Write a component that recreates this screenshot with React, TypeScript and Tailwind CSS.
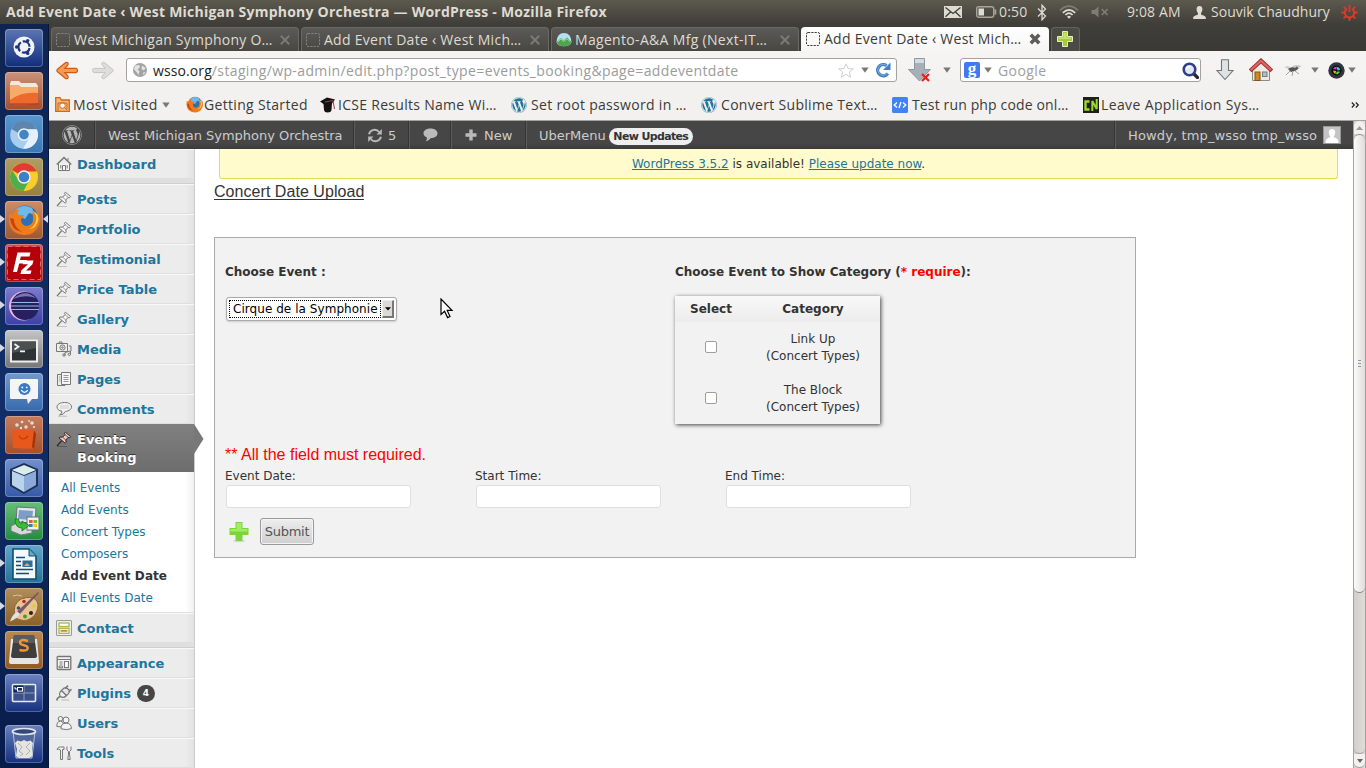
import React from "react";
import { FaWordpress } from "react-icons/fa";

const UB = "font-['Open_Sans','Noto_Sans',sans-serif] whitespace-nowrap";

/* ---------- small shared drawings ---------- */

function Caret({ className = "" }: { className?: string }) {
  return (
    <svg width="8" height="6" viewBox="0 0 8 6" className={`shrink-0 ${className}`}>
      <path d="M0.3 0.5H7.7L4 5.7Z" fill="#7b7873" />
    </svg>
  );
}

function Cross({ color, width = 3 }: { color: string; width?: number }) {
  return (
    <svg width="12" height="12" viewBox="0 0 12 12" className="shrink-0">
      <path d="M1.8 1.8L10.2 10.2M10.2 1.8L1.8 10.2" stroke={color} strokeWidth={width} />
    </svg>
  );
}

function EmptyFavicon({ color }: { color: string }) {
  return (
    <svg width="14" height="14" viewBox="0 0 14 14" className="shrink-0">
      <rect x="0.5" y="0.5" width="13" height="13" rx="1.5" fill="none" stroke={color} strokeDasharray="2.2 1.1" />
    </svg>
  );
}

/* ---------- title bar ---------- */

function TitleBar() {
  return (
    <header className={`flex h-6 w-full shrink-0 items-center bg-linear-to-b from-[#5d594e] to-[#3f3e39] pl-[6px] text-[#dfdbd2] ${UB}`}>
      <span className="w-[938px] text-[14px] leading-6 font-bold tracking-[0.23px]">
        Add Event Date ‹ West Michigan Symphony Orchestra — WordPress - Mozilla Firefox
      </span>
      <svg width="18" height="12" viewBox="0 0 18 12" className="shrink-0">
        <rect width="18" height="12" fill="#dfdbd2" />
        <path d="M1.5 1.5L9 7.5L16.5 1.5M1.5 10.8L6.5 6M16.5 10.8L11.5 6" fill="none" stroke="#3f3e39" strokeWidth="1.3" />
      </svg>
      <svg width="21" height="12" viewBox="0 0 21 12" className="ml-[14px] shrink-0">
        <rect x="0.7" y="0.7" width="17" height="10.6" rx="2" fill="none" stroke="#a9a59b" strokeWidth="1.4" />
        <rect x="18.5" y="3.5" width="1.8" height="5" fill="#a9a59b" />
        <rect x="2.5" y="2.5" width="5.5" height="7" fill="#dfdbd2" />
      </svg>
      <span className="ml-[2px] w-[38px] text-[14px] leading-6 tracking-[0.15px]">0:50</span>
      <svg width="10" height="17" viewBox="0 0 10 17" className="shrink-0">
        <path d="M1 4.5L8.5 12L5 15.8V1.2L8.5 5L1 12.5" fill="none" stroke="#dfdbd2" strokeWidth="1.3" />
      </svg>
      <svg width="20" height="14" viewBox="0 0 20 14" className="ml-[12px] shrink-0" fill="none">
        <path d="M1 5.3Q10-3.1 19 5.3" stroke="#807c73" strokeWidth="1.7" />
        <path d="M3.8 7.8Q10 1.8 16.2 7.8" stroke="#dfdbd2" strokeWidth="1.7" />
        <path d="M6.4 10Q10 6.4 13.6 10" stroke="#dfdbd2" strokeWidth="1.7" />
        <path d="M8 11.7Q10 10 12 11.7L10 13.8Z" fill="#dfdbd2" />
      </svg>
      <svg width="18" height="12" viewBox="0 0 18 12" className="ml-[12px] shrink-0">
        <path d="M0.5 4H3.5L7.5 0.5V11.5L3.5 8H0.5Z" fill="#7f7c74" />
        <path d="M10.8 3.2L16.6 9M16.6 3.2L10.8 9" stroke="#7f7c74" strokeWidth="1.7" />
      </svg>
      <span className="ml-[18px] w-[66px] text-[14px] leading-6 tracking-[0.12px]">9:08 AM</span>
      <svg width="13" height="13" viewBox="0 0 13 13" className="shrink-0">
        <path d="M6.5 0C4.3 0 3.4 1.6 3.6 3.6C3.7 5.3 4.6 6.6 5 7.4V8.6C4 9.4 0.8 9.6 0.2 11.2V13H12.8V11.2C12.2 9.6 9 9.4 8 8.6V7.4C8.4 6.6 9.3 5.3 9.4 3.6C9.6 1.6 8.7 0 6.5 0Z" fill="#dfdbd2" />
      </svg>
      <span className="ml-[5px] w-[130px] text-[14px] leading-6 tracking-[0.02px]">Souvik Chaudhury</span>
      <svg width="17" height="17" viewBox="0 0 17 17" className="shrink-0" fill="none" stroke="#e0392b">
        <path d="M5.9 4.8A4.7 4.7 0 1 0 11.1 4.8" strokeWidth="2" />
        <path d="M8.5 1V8" strokeWidth="1.8" />
        <path d="M2.8 2.9L4.8 4.9M14.2 2.9L12.2 4.9M0.4 8.5H3M14 8.5H16.6M2.6 14.4L4.8 12.2M14.4 14.4L12.2 12.2M8.5 14V16.8" strokeWidth="1.9" />
      </svg>
    </header>
  );
}

/* ---------- launcher ---------- */

const tiles: { bg: string; running?: boolean; focused?: boolean; art: React.ReactNode }[] = [
  {
    bg: "from-[#5d76b2] to-[#122d7c]",
    art: (
      <>
        <circle cx="19" cy="18" r="10.5" fill="#f2f2f5" />
        <circle cx="19" cy="18" r="5.6" fill="none" stroke="#1c3580" strokeWidth="2.2" strokeDasharray="9.7 2" strokeDashoffset="-1" />
        <circle cx="11.6" cy="18" r="1.7" fill="#1c3580" />
        <circle cx="22.7" cy="11.6" r="1.7" fill="#1c3580" />
        <circle cx="22.7" cy="24.4" r="1.7" fill="#1c3580" />
      </>
    ),
  },
  {
    bg: "from-[#c9937b] to-[#a14f30]",
    art: (
      <>
        <path d="M5 12L6 9H14L16 11H31L33 14V30H5Z" fill="#f3e8de" />
        <path d="M5 13.5H14L16 15.5H33V31Q19 34 5 32Z" fill="#ee6a2c" />
        <path d="M5 13.5H14L16 15.5H33V21Q17 19 5 28Z" fill="#f7ab68" />
        <path d="M5 32H34" stroke="#b53410" />
      </>
    ),
  },
  {
    bg: "from-[#5b97cd] to-[#3a78b7]",
    art: (
      <>
        <circle cx="19" cy="20" r="13.8" fill="#a8cdee" />
        <path d="M6.5 14A13.8 13.8 0 0 1 31.5 14H19A6 6 0 0 0 13.5 18Z" fill="#5d85ad" />
        <path d="M32 14.5A14 14 0 0 1 18 33.8L24.5 22.5A6 6 0 0 0 23 14.5Z" fill="#e5f0fa" />
        <circle cx="19" cy="19.6" r="5.6" fill="#4384c4" stroke="#e8f2fb" strokeWidth="1.5" />
      </>
    ),
  },
  {
    bg: "from-[#b19c65] to-[#968041]",
    art: (
      <>
        <circle cx="19" cy="19" r="14" fill="#f8cd28" />
        <path d="M19 19L6.9 12A14 14 0 0 1 31.1 12L31.6 13.5H19Z" fill="#e03d32" />
        <path d="M6.9 12A14 14 0 0 0 18.5 33L24.5 22L19 19L13.5 22Z" fill="#50ae49" />
        <circle cx="19" cy="19" r="6.7" fill="#f4f4f2" />
        <circle cx="19" cy="19" r="5.3" fill="#3f7fc6" />
      </>
    ),
  },
  {
    bg: "from-[#cc8e69] to-[#9e5731]",
    running: true,
    focused: true,
    art: <FirefoxArt />,
  },
  {
    bg: "from-[#c85656] to-[#a80d12]",
    running: true,
    art: (
      <>
        <rect x="2.5" y="2.5" width="33" height="33" fill="#b40008" stroke="#d86a6a" strokeDasharray="5 3" />
        <path d="M12.5 8.5H25.5L24.5 12.5H15.8L15 16H22L21 19.5H14.2L12 28H8Z" fill="#fff" />
        <path d="M18.5 16.5H28.5L27.5 20.3L21 26.5H26.5L25.5 30H15.5L16.3 26.5L23 20.2H17.8Z" fill="#fff" />
      </>
    ),
  },
  {
    bg: "from-[#7c7cd0] to-[#3d3fa6]",
    running: true,
    art: (
      <>
        <circle cx="18.5" cy="19" r="14.5" fill="#f5b6dc" />
        <circle cx="20" cy="19" r="14" fill="#262060" />
        <path d="M8 12Q20 1 31 11Q20 7 8 12Z" fill="#7776b6" />
        <path d="M6 15.5H34M6 19H34M6 22.5H34" stroke="#95b9df" strokeWidth="1.1" />
      </>
    ),
  },
  {
    bg: "from-[#c6c6c6] to-[#767676]",
    running: true,
    art: (
      <>
        <rect x="5" y="9.5" width="28" height="23" fill="#eeeeec" />
        <rect x="7" y="11.5" width="24" height="19" fill="#2d3234" />
        <path d="M7 11.5H31V18L7 23Z" fill="#4a4f50" />
        <path d="M9.5 14L13.5 16.8L9.5 19.5M15 21.3H20" fill="none" stroke="#f4f4f4" strokeWidth="1.7" />
      </>
    ),
  },
  {
    bg: "from-[#7399cc] to-[#376aac]",
    art: (
      <>
        <path d="M6 6H32Q33 6 33 7V25Q33 26 32 26H27L23 31L22 26H6Q5 26 5 25V7Q5 6 6 6Z" fill="#f3f5f7" />
        <circle cx="19.5" cy="16" r="6" fill="#3a79c5" />
        <circle cx="17.3" cy="14.4" r="0.9" fill="#fff" />
        <circle cx="21.7" cy="14.4" r="0.9" fill="#fff" />
        <path d="M16.2 17.2Q19.5 21.5 22.8 17.2" fill="none" stroke="#fff" strokeWidth="1.3" />
      </>
    ),
  },
  {
    bg: "from-[#c57c5d] to-[#a3512c]",
    art: (
      <>
        <path d="M7 14H29L31 18L29 33L8 32Z" fill="#e8581c" />
        <path d="M29 14L31 18L29 33L27 31Z" fill="#9c3410" />
        <path d="M14 20Q18 26 23 20" fill="none" stroke="#bc3c0c" strokeWidth="1.2" />
        <g fill="#e6dcd6">
          <circle cx="12" cy="9" r="1.8" /><circle cx="17" cy="6" r="1.3" /><circle cx="21" cy="11" r="1.7" /><circle cx="27" cy="7" r="1.8" /><circle cx="16" cy="12" r="1.2" /><circle cx="29" cy="11" r="1.1" /><circle cx="24" cy="5" r="0.9" />
        </g>
      </>
    ),
  },
  {
    bg: "from-[#7390cd] to-[#365aa9]",
    art: (
      <>
        <path d="M19 4L33 10V27L19 35L5 27V10Z" fill="#21304f" />
        <path d="M19 6L31 11L19 16L7 11Z" fill="#d9efee" />
        <path d="M7 12L19 17V33L7 26Z" fill="#b9d2ed" />
        <path d="M31 12L19 17V33L31 26Z" fill="#8aaada" />
      </>
    ),
  },
  {
    bg: "from-[#67bf78] to-[#1f8c40]",
    art: (
      <>
        <path d="M12 5L31 6L30 21L11 20Z" fill="#dfe5ea" stroke="#697079" />
        <path d="M14 8L28 9L27 18L13 17Z" fill="#7c9dc7" />
        <path d="M6 24L14 20L27 23V31L16 33L6 29Z" fill="#d5d9da" stroke="#727a7c" />
        <rect x="22" y="15" width="12" height="13" fill="#eef0f1" stroke="#697079" />
        <path d="M24 18H27.6V21H24Z" fill="#e9622c" /><path d="M28.4 18H32V21H28.4Z" fill="#7bb83a" />
        <path d="M24 22H27.6V25H24Z" fill="#3a78c8" /><path d="M28.4 22H32V25H28.4Z" fill="#f2c22b" />
        <path d="M10 17Q10 26 17 26V29L24 23.5L17 19V22Q14 22 13.5 17Z" fill="#3cbc38" stroke="#187a1c" strokeWidth="0.8" />
      </>
    ),
  },
  {
    bg: "from-[#65a7c9] to-[#23719a]",
    running: true,
    art: (
      <>
        <path d="M8 4H24L31 11V34H8Z" fill="#f6f9fb" stroke="#0d4f72" strokeWidth="1.6" />
        <path d="M24 4V11H31" fill="#63aace" stroke="#0d4f72" />
        <path d="M11 16.5H16M11 20.5H16M11 24.5H28M11 28.5H24M11 12.5H20" stroke="#0a507a" strokeWidth="1.7" />
        <rect x="17.5" y="15.5" width="10" height="6.5" fill="#2b6f9b" />
        <path d="M19 21L22 18L25 21Z" fill="#f3a94a" />
      </>
    ),
  },
  {
    bg: "from-[#b18e5b] to-[#8a6127]",
    running: true,
    art: (
      <>
        <path d="M10 28Q7 16 16 11Q27 7 32 13Q35 20 29 28Q22 34 16 32Q10 31 10 28Z" fill="#e8c590" stroke="#8d6635" />
        <circle cx="19" cy="13.5" r="1.8" fill="#b9262d" /><circle cx="13.5" cy="20" r="1.8" fill="#2d4e9e" /><circle cx="29" cy="18" r="1.8" fill="#dfc93a" /><circle cx="26" cy="25" r="2" fill="#222" /><circle cx="20" cy="28.5" r="2" fill="#4b9a41" />
        <path d="M33 4L34 5L15 26L12 23.5Z" fill="#7b5867" />
        <path d="M12 23.5L15 26Q12 31 5 33.5Q7 27 12 23.5Z" fill="#dfe1e4" />
        <path d="M8 8Q12 6 17 8" fill="none" stroke="#d9c4a1" />
      </>
    ),
  },
  {
    bg: "from-[#ba8a53] to-[#925a22]",
    art: (
      <>
        <path d="M6 8H32L34 31Q34 33 32 33H6Q4 33 4 31Z" fill="#e5e5e5" />
        <path d="M9 4H29L32 25Q32 27 30 27H8Q6 27 6 25Z" fill="#3e3e3e" />
        <path d="M9 4H29L30 12H8Z" fill="#5b5b5b" />
        <path d="M23 10Q15 7.4 15 11.5Q15 13.5 19 14.3Q23.2 15.2 22.7 17.4Q22 20.5 14.5 19" fill="none" stroke="#f0953a" strokeWidth="2.4" />
      </>
    ),
  },
  {
    bg: "from-[#6e83c2] to-[#16307f]",
    art: (
      <>
        <rect x="7.5" y="10.5" width="23" height="17" rx="1" fill="#3c5286" stroke="#e6e9f2" strokeWidth="1.6" />
        <path d="M19 11V27M8 19H30" stroke="#8c9bbf" strokeWidth="1" />
        <rect x="8.5" y="11.5" width="10" height="7" fill="#14265a" />
        <rect x="12.5" y="13.5" width="5" height="3.6" fill="none" stroke="#fff" />
        <path d="M10 13V15H12" stroke="#fff" fill="none" />
      </>
    ),
  },
  {
    bg: "from-[#6a80be] to-[#16307f]",
    art: (
      <>
        <path d="M8 6L11 33H27L30 6Z" fill="#51679b" stroke="#b9c4d8" />
        <ellipse cx="19" cy="6.5" rx="11.5" ry="3" fill="#33477a" stroke="#dfe5ee" strokeWidth="1.7" />
        <path d="M10 18L12.5 15.5L16 16.5L19 15L22 16.5L25.5 15.5L28 18L27 24L27.5 31L24 33H14L11 31L12 24Z" fill="#e4e4e1" />
        <path d="M13 18L17 22L14 26L18 29M25 18L21 22L25 26L21 30M15 31L18 29" stroke="#b0b1b0" fill="none" />
      </>
    ),
  },
];

function FirefoxArt() {
  return (
    <>
      <circle cx="20" cy="17.5" r="13" fill="#2f6fb4" />
      <path d="M10 9Q18 2 27 7L30 14L24 12L20 18L14 15Z" fill="#71b9e6" />
      <path d="M4 13Q6 12 7 14Q9 8 14 9Q11 12 14 14H19Q19 16 16 18Q16 25 22 25Q29 24 28 16Q27 11 28 10Q31 13 31.5 16Q33 11 31 8Q37 16 34 24Q30 34 19 34Q5 33 4 20Z" fill="#ee7c1b" />
      <path d="M28 10Q32 14 31 20Q29 27 23 28Q32 28 33.5 18Q33 12 28 10Z" fill="#fbd147" />
      <path d="M5 17Q6 29 17 31Q8 25 9 18Z" fill="#c9430f" />
    </>
  );
}

function Launcher() {
  return (
    <aside className="relative flex w-[49px] shrink-0 flex-col gap-[5px] border-r border-[#0a1638] bg-linear-to-b from-[#0f2450] via-[#122e68] to-[#081c4a] pt-[5px]">
      {tiles.map((t, i) => (
        <div key={i} className={`relative flex h-[38px] shrink-0 pl-[5px] ${i === 16 ? "mt-[8px]" : ""}`}>
          <div className={`h-[38px] w-[38px] rounded-[4px] bg-linear-to-b ring-1 ring-[#ffffff40] ring-inset ${t.bg}`}>
            <svg width="38" height="38" viewBox="0 0 38 38">{t.art}</svg>
          </div>
          {t.running && (
            <svg width="5" height="10" viewBox="0 0 5 10" className="absolute top-[13px] left-0">
              <path d="M0 1L5 5L0 9Z" fill="#d5d9e2" />
            </svg>
          )}
          {t.focused && (
            <svg width="5" height="10" viewBox="0 0 5 10" className="absolute top-[13px] right-0">
              <path d="M5 1L0 5L5 9Z" fill="#d5d9e2" />
            </svg>
          )}
        </div>
      ))}
    </aside>
  );
}

/* ---------- browser chrome ---------- */

function Tab({ icon, label, className }: { icon: React.ReactNode; label: string; className: string }) {
  return (
    <div className={`mr-[2px] flex h-6 w-[248px] shrink-0 items-center rounded-t-[4px] border border-b-0 border-[#6b6963] bg-linear-to-b from-[#5b5a56] to-[#484742] pr-[7px] pl-[4px] text-[#dfdbd2] ${UB}`}>
      {icon}
      <span className={`grow pl-[4px] text-[14px] leading-6 ${className}`}>{label}</span>
      <Cross color="#7b7a75" width={2} />
    </div>
  );
}

function TabStrip() {
  return (
    <div className="flex h-[27px] items-end bg-linear-to-b from-[#3f3e39] to-[#3a3935] pl-[2px]">
      <Tab icon={<EmptyFavicon color="#85837d" />} label="West Michigan Symphony O…" className="tracking-[0.23px]" />
      <Tab icon={<EmptyFavicon color="#85837d" />} label="Add Event Date ‹ West Mich…" className="tracking-[0.27px]" />
      <Tab
        icon={
          <svg width="16" height="16" viewBox="0 0 16 16" className="shrink-0">
            <path d="M0.5 10Q1 1 8 1Q15 1 15.5 10Q15 14 8 14.3Q1 14 0.5 10Z" fill="#b3dff2" />
            <path d="M1 10L5 6L7.5 8.5L11 5.5L15.3 10Q15 14 8 14.3Q1 14 1 10Z" fill="#4fa44e" />
            <path d="M2 9.8L5 7L7.5 9.5L11 6.8L14 9.8" fill="none" stroke="#9fd788" />
          </svg>
        }
        label="Magento-A&A Mfg (Next-IT…"
        className="-ml-px tracking-[0.32px]"
      />
      <div className={`flex h-6 w-[248px] shrink-0 items-center rounded-t-[4px] bg-linear-to-b from-white to-[#f6f5f4] pr-[8px] pl-[5px] text-[#3c3b37] ${UB}`}>
        <EmptyFavicon color="#3c3b37" />
        <span className="grow pl-[4px] text-[14px] leading-6 tracking-[0.27px]">Add Event Date ‹ West Mich…</span>
        <Cross color="#5d5c58" width={3.6} />
      </div>
      <div className="ml-[2px] flex h-6 w-[29px] items-center justify-center rounded-t-[4px] border border-b-0 border-[#65635c] bg-[#4b4a45] pr-[2px] pb-[2px]">
        <svg width="16" height="16" viewBox="0 0 16 16">
          <path d="M5.5 0.5H10.5V5.5H15.5V10.5H10.5V15.5H5.5V10.5H0.5V5.5H5.5Z" fill="#a4cc39" stroke="#e6f0c4" />
          <path d="M6.5 2H9.5V6.5H14V8H2V6.5H6.5Z" fill="#c5e26c" />
        </svg>
      </div>
    </div>
  );
}

function NavBar() {
  return (
    <div className="flex h-[38px] items-center bg-linear-to-b from-[#f6f5f4] to-[#f2f1f0] pl-[7px]">
      <svg width="22" height="19" viewBox="0 0 22 19" className="shrink-0">
        <path d="M9 2Q10.5 0.6 12 2Q12.5 3.5 11.5 4.5L8.7 7.4H20Q21.5 7.8 21.5 9.5Q21.5 11.2 20 11.6H8.7L11.5 14.5Q12.5 15.5 12 17Q10.5 18.4 9 17L1.2 10.5Q0.4 9.5 1.2 8.5Z" fill="#f39a5b" stroke="#cf5a16" strokeWidth="1.1" />
      </svg>
      <svg width="22" height="19" viewBox="0 0 22 19" className="ml-[14px] shrink-0">
        <path d="M13 2Q11.5 0.6 10 2Q9.5 3.5 10.5 4.5L13.3 7.4H2Q0.5 7.8 0.5 9.5Q0.5 11.2 2 11.6H13.3L10.5 14.5Q9.5 15.5 10 17Q11.5 18.4 13 17L20.8 10.5Q21.6 9.5 20.8 8.5Z" fill="#deddda" stroke="#c6c4c0" />
      </svg>
      <div className={`ml-[12px] flex h-6 w-[771px] shrink-0 items-center rounded-[3px] border border-[#a5a29d] bg-white pl-[6px] ${UB}`}>
        <svg width="14" height="14" viewBox="0 0 14 14" className="shrink-0">
          <circle cx="7" cy="7" r="7" fill="#a3a3a3" />
          <path d="M2 2.5L6 2L7 4L4.5 6.5L6.5 8L5.5 12L3.5 9L1 6.5ZM9 2.5L12.5 5L11 7.5L8.5 6ZM10 9.5L12.5 9L10.5 12Z" fill="#e4e4e4" />
        </svg>
        <span className="ml-[6px] w-[685px] pt-[2px] text-[14px] leading-[22px] tracking-[0.37px] text-[#9b9b9b]">
          <span className="tracking-[0.1px] text-[#1d1d1d]">wsso.org</span>/staging/wp-admin/edit.php?post_type=events_booking&amp;page=addeventdate
        </span>
        <svg width="16" height="15" viewBox="0 0 16 15" className="shrink-0">
          <path d="M8 0.8L10 5.6L15.3 5.8L11.3 9L12.6 14.2L8 11.4L3.4 14.2L4.7 9L0.7 5.8L6 5.6Z" fill="#fff" stroke="#cfcfcf" />
        </svg>
        <Caret className="ml-[7px]" />
        <svg width="16" height="16" viewBox="0 0 16 16" className="ml-[6px] shrink-0">
          <path d="M12.8 11.5A5.6 5.6 0 1 1 11.5 3.6" fill="none" stroke="#447fc0" strokeWidth="3.4" />
          <path d="M15.5 0.5V8H8Z" fill="#447fc0" />
          <path d="M12.4 11.2A5.4 5.4 0 1 1 12.4 4.4" fill="none" stroke="#83b2e0" strokeWidth="1" />
        </svg>
      </div>
      <svg width="25" height="24" viewBox="0 0 25 24" className="ml-[10px] shrink-0">
        <path d="M7.5 0.5H17.5V11.5H23.5L12.5 23L1.5 11.5H7.5Z" fill="#a6b0b8" stroke="#8f989e" />
        <path d="M8 1H17V5H8Z" fill="#d5dbdf" />
        <path d="M15 16L22 23M22 16L15 23" stroke="#ef1d1d" strokeWidth="2.2" />
      </svg>
      <Caret className="ml-[11px]" />
      <div className={`ml-[9px] flex h-6 w-[241px] shrink-0 items-center rounded-[3px] border border-[#a5a29d] bg-white pl-[3px] ${UB}`}>
        <div className="flex h-4 w-4 items-center justify-center rounded-[2px] bg-[#4279f0] pb-[3px] font-['Liberation_Serif',serif] text-[17px] leading-4 font-bold text-white">g</div>
        <Caret className="ml-[4px]" />
        <span className="ml-[6px] w-[184px] pt-[2px] text-[14px] leading-[22px] tracking-[0.4px] text-[#a0a0a0]">Google</span>
        <svg width="17" height="17" viewBox="0 0 17 17" className="shrink-0">
          <path d="M11 11L15.5 15.5" stroke="#26262e" strokeWidth="3.2" strokeLinecap="round" />
          <circle cx="7.5" cy="7.5" r="5.8" fill="#dfe9f7" stroke="#2f3f88" strokeWidth="2.6" />
          <path d="M4.5 7Q5.5 4 8.5 4.5" fill="none" stroke="#fff" strokeWidth="1.5" />
        </svg>
      </div>
      <svg width="18" height="22" viewBox="0 0 18 22" className="ml-[15px] shrink-0">
        <path d="M5.5 0.8H12.5V11.5H17L9 20.5L1 11.5H5.5Z" fill="#dfe3e4" stroke="#717577" strokeWidth="1.1" />
      </svg>
      <svg width="24" height="24" viewBox="0 0 24 24" className="ml-[15px] shrink-0">
        <path d="M3.5 11V22.5H20.5V11L12 4Z" fill="#eceae5" stroke="#8c8a85" />
        <path d="M1.2 12.8L12 2.8L22.8 12.8" fill="none" stroke="#9e2222" strokeWidth="4" />
        <path d="M1.8 12.2L12 2.8L22.2 12.2" fill="none" stroke="#d86464" strokeWidth="2.4" />
        <rect x="6" y="14" width="5" height="8.5" fill="#d08a1c" stroke="#7c5414" />
        <rect x="13.5" y="14" width="4.5" height="4.5" fill="#aebfd2" stroke="#7a7a76" />
      </svg>
      <svg width="18" height="14" viewBox="0 0 18 14" className="ml-[11px] shrink-0">
        <path d="M0.5 4.5Q4 2 7 5Q10 0 17.5 3Q13 7 9 7Z" fill="#c9c9c9" />
        <path d="M4 6Q8 3 11 5L13 3.5L14.5 5.5L12 7.5L7 9Z" fill="#555" />
        <path d="M6 8L2 12M9 8L8 13M11 8L15 11" stroke="#999" strokeWidth="0.9" />
      </svg>
      <Caret className="ml-[9px]" />
      <svg width="17" height="17" viewBox="0 0 17 17" className="ml-[9px] shrink-0">
        <circle cx="8.5" cy="8.5" r="8.2" fill="#30363a" />
        <circle cx="8.5" cy="8.5" r="5" fill="#0a0a0c" />
        <path d="M5 7A4 4 0 0 1 8.5 4.7V7.5Z" fill="#d23bd6" />
        <path d="M8.5 4.7A4 4 0 0 1 12.3 8L9.5 8.5Z" fill="#35c6e8" />
        <path d="M12 9.5A4 4 0 0 1 8 12.3L8.6 9.5Z" fill="#5ed33c" />
        <path d="M7.5 12A4 4 0 0 1 5 8.5L8 9Z" fill="#e8b22c" />
      </svg>
      <Caret className="ml-[3px]" />
    </div>
  );
}

function Bookmark({ width, icon, gap, label, track, caret }: { width: string; icon: React.ReactNode; gap: string; label: string; track: string; caret?: boolean }) {
  return (
    <div className={`flex shrink-0 items-center ${width} ${UB}`}>
      {icon}
      <span className={`text-[14px] leading-5 text-[#3c3b37] ${gap} ${track}`}>{label}</span>
      {caret && <Caret className="ml-[4px]" />}
    </div>
  );
}

function BookmarksBar() {
  const wp = <FaWordpress size={16} color="#21759b" className="shrink-0" />;
  return (
    <div className="flex h-[32px] items-center border-b border-[#a5a29d] bg-[#f2f1f0] pl-[6px]">
      <Bookmark
        width="w-[131px]" gap="ml-[3px]" track="tracking-[0.42px]" label="Most Visited" caret
        icon={
          <svg width="15" height="15" viewBox="0 0 15 15" className="shrink-0">
            <path d="M0.7 14.3V0.7H5L6.5 3H14.3V14.3Z" fill="#f4b67a" stroke="#cf6a12" strokeWidth="1.3" />
            <circle cx="7.5" cy="8.5" r="2.8" fill="#fff" stroke="#cf6a12" />
            <path d="M3 14V6H12V12M9.5 10.5L12 13" fill="none" stroke="#cf6a12" />
          </svg>
        }
      />
      <Bookmark
        width="w-[134px]" gap="ml-[1px]" track="tracking-[0.32px]" label="Getting Started"
        icon={<svg width="17" height="17" viewBox="3 3 32 32" className="shrink-0"><FirefoxArt /></svg>}
      />
      <Bookmark
        width="w-[191px]" gap="ml-[2px]" track="tracking-[0.29px]" label="ICSE Results Name Wi…"
        icon={
          <svg width="16" height="16" viewBox="0 0 16 16" className="shrink-0">
            <path d="M0 4.5L7 0.5L15 2.5L12 6.5L11.5 13Q11 15.5 7.5 15.5Q4.5 15.5 4 13L3.5 7Z" fill="#111" />
            <path d="M5 5L13 3.5L14.5 12" fill="none" stroke="#a33a4a" />
          </svg>
        }
      />
      <Bookmark width="w-[190px]" gap="ml-[4px]" track="tracking-[0.31px]" label="Set root password in …" icon={wp} />
      <Bookmark width="w-[191px]" gap="ml-[4px]" track="tracking-[0.31px]" label="Convert Sublime Text…" icon={wp} />
      <Bookmark
        width="w-[191px]" gap="ml-[4px]" track="tracking-[0.14px]" label="Test run php code onl…"
        icon={
          <svg width="16" height="16" viewBox="0 0 16 16" className="shrink-0">
            <rect width="16" height="16" rx="1.5" fill="#4283f3" />
            <path d="M5 5.5L2.2 8L5 10.5M11 5.5L13.8 8L11 10.5M9 5L7 11" fill="none" stroke="#fff" strokeWidth="1.3" />
          </svg>
        }
      />
      <Bookmark
        width="w-[268px]" gap="ml-[2px]" track="tracking-[0.37px]" label="Leave Application Sys…"
        icon={
          <svg width="16" height="16" viewBox="0 0 16 16" className="shrink-0">
            <rect width="16" height="16" fill="#1e1e1c" />
            <path d="M6.5 4.5H2.5V12.5H6.5" fill="none" stroke="#9bd631" strokeWidth="2.4" />
            <path d="M9.3 14V4L13.7 12V2" fill="none" stroke="#9bd631" strokeWidth="2" />
          </svg>
        }
      />
      <svg width="9" height="6" viewBox="0 0 9 6" className="shrink-0">
        <path d="M0.8 0.5L3.3 3L0.8 5.5M4.8 0.5L7.3 3L4.8 5.5" fill="none" stroke="#222" strokeWidth="1.2" />
      </svg>
    </div>
  );
}

/* ---------- WordPress admin ---------- */

const DJ = "font-['DejaVu_Sans',sans-serif] whitespace-nowrap";

function AdminBar() {
  const cell = "flex h-full shrink-0 items-center border-r border-[#5c5c5c] shadow-[inset_-1px_0_0_#353535]";
  return (
    <div className={`flex h-7 shrink-0 items-center bg-linear-to-b from-[#464646] from-80% to-[#3a3a3a] text-[13px] leading-[26px] text-[#ccc] ${DJ}`}>
      <div className={`${cell} w-[47px] pl-[13px]`}>
        <FaWordpress size={20} color="#b5b5b5" />
      </div>
      <div className={`${cell} w-[259px] pl-[12px]`}>
        <span className="pt-[2px] tracking-[-0.03px]">West Michigan Symphony Orchestra</span>
      </div>
      <div className={`${cell} w-[55px] pl-[12px]`}>
        <svg width="16" height="15" viewBox="0 0 16 15" fill="none" stroke="#bababa" strokeWidth="1.9">
          <path d="M2 6.2A5.8 5.8 0 0 1 12.2 4M14 8.8A5.8 5.8 0 0 1 3.8 11" />
          <path d="M14.8 1V6.5H9.5Z" fill="#bababa" stroke="none" />
          <path d="M1.2 14V8.5H6.5Z" fill="#bababa" stroke="none" />
        </svg>
        <span className="ml-[5px] pt-[2px]">5</span>
      </div>
      <div className={`${cell} w-[42px] pl-[13px]`}>
        <svg width="15" height="14" viewBox="0 0 15 14">
          <path d="M7.5 0.5C3 0.5 0.5 2.7 0.5 5.3Q0.6 8.3 4 9.6Q4 12 2.6 13.5Q6 13 7.5 10.2C12 10.2 14.5 8 14.5 5.3C14.5 2.7 12 0.5 7.5 0.5Z" fill="#bababa" />
        </svg>
      </div>
      <div className={`${cell} w-[75px] pl-[13px]`}>
        <svg width="12" height="12" viewBox="0 0 12 12"><path d="M4.3 0.5H7.7V4.3H11.5V7.7H7.7V11.5H4.3V7.7H0.5V4.3H4.3Z" fill="#bababa" /></svg>
        <span className="ml-[7px] pt-[2px]">New</span>
      </div>
      <div className="flex h-full w-[588px] shrink-0 items-center pl-[12px] shadow-[inset_-1px_0_0_#353535]">
        <span className="pt-[2px]">UberMenu</span>
        <span className="mt-[2px] ml-[3px] flex h-[17px] w-[84px] items-center justify-center rounded-full bg-[#eee] text-[11px] leading-none font-bold tracking-[-0.65px] text-[#333]">New Updates</span>
      </div>
      <div className="flex h-full grow items-center border-l border-[#5c5c5c] pl-[12px]">
        <span className="w-[189px] pt-[2px] tracking-[0.13px]">Howdy, tmp_wsso tmp_wsso</span>
        <svg width="18" height="18" viewBox="0 0 18 18" className="ml-[6px] shrink-0">
          <rect x="0.5" y="0.5" width="17" height="17" fill="#c5c5c5" stroke="#999" />
          <path d="M9 3Q12.2 3 12.2 6.5Q12 9 10.8 10.3V11.3Q14.8 12.2 15.3 15V17H2.7V15Q3.2 12.2 7.2 11.3V10.3Q6 9 5.8 6.5Q5.8 3 9 3Z" fill="#fff" />
        </svg>
      </div>
    </div>
  );
}

const Svg16 = ({ children }: { children: React.ReactNode }) => (
  <svg width="16" height="16" viewBox="0 0 16 16" fill="none" stroke="#777" className="shrink-0">{children}</svg>
);

const PinIcon = ({ color = "#777", fill = "#f4f4f4" }: { color?: string; fill?: string }) => (
  <svg width="16" height="16" viewBox="0 0 16 16" className="shrink-0" fill={fill} stroke={color}>
    <path d="M1 15L6 9.3" strokeWidth="1.2" />
    <path d="M1.5 15.5H11" stroke={color} strokeOpacity="0.35" fill="none" />
    <path d="M9.4 1.2L14.6 5.6L13.4 6.8L12.2 6.3L9.8 9L10.2 11.3L9.2 12.2L3 7L4 6L6.6 6.2L9 3.6L8.4 2.3Z" />
    <path d="M9 3.6L12.2 6.3M6.6 6.2L9.8 9" fill="none" strokeWidth="0.7" />
  </svg>
);

const HouseIcon = () => (
  <Svg16>
    <path d="M2.5 8V14.5H13.5V8" fill="#f7f7f7" />
    <path d="M0.8 8.5L8 1.5L15.2 8.5" strokeWidth="1.6" />
    <path d="M12 2V4.5M6.5 14V9.5H9.5V14M4.8 9V12.5M11.2 9V12.5" />
  </Svg16>
);
const MediaIcon = () => (
  <Svg16>
    <path d="M0.5 2.5H11.5V10.5H0.5ZM3 2.5V1H6V2.5" fill="#eee" />
    <circle cx="6.5" cy="6.5" r="2.6" /><circle cx="6.5" cy="6.5" r="0.8" />
    <path d="M9 14.5V11.5L14.5 10V13.5M13 5H15V10" />
    <circle cx="8" cy="14" r="1.2" /><circle cx="13.3" cy="13.3" r="1.2" />
  </Svg16>
);
const PagesIcon = () => (
  <Svg16>
    <path d="M1.5 3.5H9V14.5H1.5Z" fill="#eee" />
    <path d="M5.5 1.5H14.5V13.5H5.5Z" fill="#f6f6f6" />
    <path d="M7.5 4.5H12.5M7.5 6.5H12.5M7.5 8.5H12.5M7.5 10.5H12.5M3 6H4.5M3 8H4.5M3 10H4.5" stroke="#999" />
  </Svg16>
);
const CommentIcon = () => (
  <Svg16>
    <path d="M8.5 1.5C4 1.5 1 3.4 1 6C1 8.2 3 9.8 6 10.3Q6 12.7 3.5 14Q8 13.7 9.5 10.4C13 10 15.5 8.3 15.5 6C15.5 3.4 13 1.5 8.5 1.5Z" fill="#f2f2f2" />
    <path d="M4 5H13M4 7H13" stroke="#ccc" /><path d="M2 15.2H11" stroke="#bbb" />
  </Svg16>
);
const ContactIcon = () => (
  <Svg16>
    <rect x="0.5" y="0.5" width="15" height="15" rx="0.5" fill="#eee" stroke="#999" />
    <rect x="3" y="3" width="10" height="3.5" fill="#fff" stroke="#a9b943" strokeWidth="1.3" />
    <rect x="3" y="8.3" width="10" height="5" fill="#fff" stroke="#a9b943" strokeWidth="1.3" />
    <path d="M4.5 10.8H11.5" stroke="#e37a68" strokeWidth="2" />
  </Svg16>
);
const AppearanceIcon = () => (
  <Svg16>
    <rect x="1.2" y="1.5" width="13.6" height="13" rx="0.8" fill="#f4f4f4" strokeWidth="1.3" />
    <path d="M1.5 4.5H14.5M3.5 7H6.5M3.5 9H6.5M3 11H6.5V12.8H3Z" />
    <path d="M8.5 6.5H12.5V12.5H8.5Z" fill="#fff" strokeWidth="1.2" />
  </Svg16>
);
const PlugIcon = () => (
  <Svg16>
    <path d="M5.5 5.5L10.5 10.5Q7.5 13.8 4.5 11.5Q2.2 8.5 5.5 5.5Z" fill="#f2f2f2" strokeWidth="1.2" />
    <path d="M5.5 5.5L8 3Q11 2.6 13.2 5Q14 8.2 10.5 10.5Z" fill="#e4e4e4" strokeWidth="1.2" />
    <path d="M9 3.5L12 0.6M12.8 7L15.5 4.2M4.6 11.5Q1.6 12 0.6 15.4" strokeWidth="1.6" />
    <path d="M5.5 15H13" stroke="#bbb" />
  </Svg16>
);
const UsersIcon = () => (
  <Svg16>
    <circle cx="4.5" cy="3.8" r="2.3" fill="#eee" />
    <path d="M0.8 11.5Q0.6 6.3 4.5 6.2Q7 6.2 7.5 9V12Z" fill="#eee" />
    <circle cx="10" cy="5" r="3" fill="#f4f4f4" />
    <path d="M5 13.8Q4.8 8.2 10 8.2Q15.4 8.2 15.4 13.6Q11 15.6 5 13.8Z" fill="#f4f4f4" />
  </Svg16>
);
const ToolsIcon = () => (
  <Svg16>
    <path d="M1 4.5Q2 1.5 4.5 2H8V4.5H6.5V14.5H4.5V5Q2.5 3.5 1 4.5Z" fill="#f2f2f2" />
    <path d="M11 1.5V5L12.5 6.5V9L11.8 14.5H14.2L13.5 9V6.5L15 5V1.5" fill="#f2f2f2" />
  </Svg16>
);

function MenuItem({ icon, label, badge }: { icon: React.ReactNode; label: string; badge?: string }) {
  return (
    <div className="flex h-[30px] shrink-0 items-center border-t border-b border-t-[#f9f9f9] border-b-[#dfdfdf] bg-[#ececec] bg-linear-to-l from-[#e2e2e2] to-[#ececec] to-6% pl-[7px] text-[13px] font-bold text-[#21759b]">
      {icon}
      <span className="ml-[5px] pt-[2px]">{label}</span>
      {badge && <span className="mt-px ml-[6px] flex h-[17px] w-[18px] items-center justify-center rounded-full bg-[#464646] text-[9px] text-white">{badge}</span>}
    </div>
  );
}

const Separator = () => <div className="h-[5px] shrink-0 border-b border-[#cfcfcf] bg-[#dfdfdf]" />;

function Sidebar() {
  return (
    <nav className={`relative z-10 flex w-[146px] shrink-0 flex-col border-r border-[#ccc] bg-[#ececec] ${DJ}`}>
      <MenuItem icon={<HouseIcon />} label="Dashboard" />
      <Separator />
      {["Posts", "Portfolio", "Testimonial", "Price Table", "Gallery"].map((l) => (
        <MenuItem key={l} icon={<PinIcon />} label={l} />
      ))}
      <MenuItem icon={<MediaIcon />} label="Media" />
      <MenuItem icon={<PagesIcon />} label="Pages" />
      <MenuItem icon={<CommentIcon />} label="Comments" />
      <div className="relative flex h-12 shrink-0 bg-linear-to-b from-[#808080] to-[#6d6d6d] pt-[7px] pl-[7px] text-[13px] leading-[18px] font-bold text-white [text-shadow:0_-1px_0_#333]">
        <PinIcon color="#2e2222" fill="#ecc9c4" />
        <span className="ml-[5px]">Events<br />Booking</span>
        <svg width="10" height="30" viewBox="0 0 10 30" className="absolute top-0 -right-[10px]">
          <path d="M0 0L9.5 15L0 30Z" fill="#787878" />
        </svg>
      </div>
      <ul className="h-[141px] shrink-0 border-b border-[#dfdfdf] bg-white bg-linear-to-l from-[#f0f0f0] to-white to-6% pt-[5px] pl-[12px] text-[12px] leading-[22px] text-[#21759b]">
        <li>All Events</li>
        <li>Add Events</li>
        <li>Concert Types</li>
        <li>Composers</li>
        <li className="font-bold tracking-[0.06px] text-[#333]">Add Event Date</li>
        <li>All Events Date</li>
      </ul>
      <MenuItem icon={<ContactIcon />} label="Contact" />
      <Separator />
      <MenuItem icon={<AppearanceIcon />} label="Appearance" />
      <MenuItem icon={<PlugIcon />} label="Plugins" badge="4" />
      <MenuItem icon={<UsersIcon />} label="Users" />
      <MenuItem icon={<ToolsIcon />} label="Tools" />
    </nav>
  );
}

function Field({ label }: { label: string }) {
  return (
    <div className="w-[250px]">
      <div className="h-[18px] leading-[18px]">{label}</div>
      <div className="ml-px h-[23px] w-[185px] rounded-[3px] border border-[#dfdfdf] bg-white" />
    </div>
  );
}

function CategoryRow({ name, className }: { name: string; className: string }) {
  return (
    <div className={`flex items-center text-center ${className}`}>
      <div className="flex w-[72px] justify-center pb-[2px]">
        <div className="h-[12px] w-[12px] rounded-[2px] border border-[#a09e9a] bg-white" />
      </div>
      <div className="w-[132px] leading-[17px]">{name}<br />(Concert Types)</div>
    </div>
  );
}

function Main() {
  return (
    <main className={`relative flex grow flex-col bg-white text-[12px] text-[#333] ${DJ}`}>
      <div className="ml-[24px] h-[30px] w-[1119px] rounded-b-[3px] border border-t-0 border-[#e6db55] bg-[#fffbcc] text-center leading-[30px]">
        <a className="text-[#21759b] underline">WordPress 3.5.2</a> is available! <a className="text-[#21759b] underline">Please update now</a>.
      </div>
      <div className="ml-[19px] flex h-[58px] pt-[3px]">
        <h1 className="h-[18px] border-b border-[#333] font-['Liberation_Sans',sans-serif] text-[16px] leading-[20px] tracking-[0.05px]">Concert Date Upload</h1>
      </div>
      <section className="ml-[19px] h-[321px] w-[922px] border border-[#aaa] bg-[#f2f2f2] pl-[10px]">
        <div className="flex h-[206px] pt-[25px]">
          <div className="w-[450px]">
            <div className="leading-[18px] font-bold">Choose Event :</div>
            <div className="mt-[16px] ml-px flex h-6 w-[171px] rounded-[3px] border border-[#aaa] bg-white p-[2px] text-black shadow-[0_1px_2px_#ccc]">
              <div className="flex grow items-center border border-dotted border-black pl-[3px] leading-4 tracking-[0.05px]">Cirque de la Symphonie</div>
              <div className="ml-px flex w-[12px] items-center justify-center border border-t-[#eee] border-r-2 border-b-2 border-l-[#eee] border-r-[#777] border-b-[#777] bg-[#dcdad5]">
                <svg width="6" height="4" viewBox="0 0 6 4"><path d="M0 0.3H6L3 3.6Z" fill="#000" /></svg>
              </div>
            </div>
          </div>
          <div>
            <div className="leading-[18px] font-bold">
              Choose Event to Show Category (<span className="text-[#f00]">* require</span>):
            </div>
            <div className="mt-[15px] h-[128px] w-[205px] bg-[#f2f2f2] shadow-[1px_1px_4px_#444]">
              <div className="flex h-[26px] items-center bg-linear-to-b from-[#f9f9f9] to-[#ececec] text-center font-bold">
                <div className="w-[72px]">Select</div>
                <div className="w-[132px]">Category</div>
              </div>
              <CategoryRow name="Link Up" className="h-[52px]" />
              <CategoryRow name="The Block" className="h-[50px]" />
            </div>
          </div>
        </div>
        <div className="h-[23px] font-['Liberation_Sans',sans-serif] text-[16px] leading-[22px] text-[#f00]">** All the field must required.</div>
        <div className="flex">
          <Field label="Event Date:" />
          <Field label="Start Time:" />
          <Field label="End Time:" />
        </div>
        <div className="mt-[10px] flex items-center">
          <svg width="22" height="22" viewBox="0 0 22 22" className="ml-[3px]">
            <ellipse cx="11" cy="20" rx="6" ry="1.3" fill="#d8d8d8" />
            <path d="M7.5 1H14.5V7H20.5V14H14.5V20H7.5V14H1.5V7H7.5Z" fill="#7cd63a" />
            <path d="M8.5 2H13.5V8H19.5V10.5H2.5V8H8.5Z" fill="#a2ec63" />
          </svg>
          <button className="ml-[10px] flex h-[27px] w-[54px] items-center justify-center rounded-[3px] border border-[#999] bg-linear-to-b from-[#eee] to-[#cfcfcf] text-[13px] tracking-[-0.25px] text-[#555] shadow-[inset_0_0_0_1px_#f4f4f4]">Submit</button>
        </div>
      </section>
      <svg width="14" height="22" viewBox="0 0 14 22" className="absolute top-[149px] left-[245px]">
        <path d="M1 1V16.5L4.6 13.2L7.6 19.6L10 18.5L7.2 12.4H12Z" fill="#fff" stroke="#000" strokeWidth="1.2" />
      </svg>
    </main>
  );
}

function Scrollbar() {
  return (
    <div className="flex w-[13px] shrink-0 flex-col border-x border-[#a5a29d] bg-linear-to-r from-[#d2cfcb] to-[#dedcd9]">
      <div className="flex h-[13px] shrink-0 items-center justify-center rounded-t-[6px] bg-[#f2f1f0]">
        <svg width="7" height="4" viewBox="0 0 7 4"><path d="M0 4L3.5 0L7 4Z" fill="#a09d99" /></svg>
      </div>
      <div className="flex h-[459px] shrink-0 flex-col items-center justify-center gap-[2px] rounded-[6px] border-y border-[#8f8c88] bg-linear-to-r from-[#fbfbfa] to-[#dfdddb]">
        <div className="h-px w-[3px] bg-[#999]" />
        <div className="h-px w-[3px] bg-[#999]" />
        <div className="h-px w-[3px] bg-[#999]" />
      </div>
      <div className="grow rounded-b-[6px] border-b border-[#a5a29d]" />
      <div className="flex h-[14px] shrink-0 items-center justify-center rounded-b-[6px] border-b border-[#a5a29d] bg-[#f2f1f0]">
        <svg width="6" height="4" viewBox="0 0 6 4"><path d="M0 0H6L3 4Z" fill="#666" /></svg>
      </div>
    </div>
  );
}

export default function App() {
  return (
    <div className="flex h-[768px] w-[1366px] flex-col overflow-hidden bg-[#f2f1f0]">
      <TitleBar />
      <div className="flex min-h-0 grow">
        <Launcher />
        <div className="flex min-w-0 grow flex-col">
          <TabStrip />
          <NavBar />
          <BookmarksBar />
          <div className="flex min-h-0 grow">
            <div className="flex grow flex-col">
              <AdminBar />
              <div className="flex min-h-0 grow">
                <Sidebar />
                <Main />
              </div>
            </div>
            <Scrollbar />
          </div>
        </div>
      </div>
    </div>
  );
}
